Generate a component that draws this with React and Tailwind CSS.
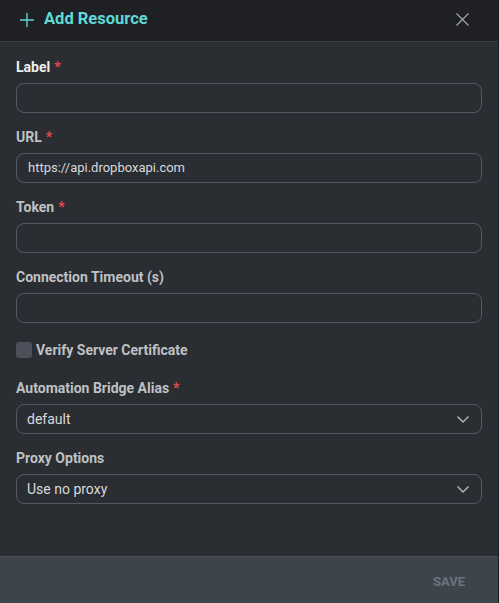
import React from "react";

const font = { fontFamily: "Roboto, 'Liberation Sans', sans-serif" };

function Label({ children, required, bright }) {
  return (
    <div className={`h-4 leading-4 text-[14px] font-bold mb-2 ${bright ? "text-[#eeeeee]" : "text-[#bfc1c4]"}`}>
      {children}
      {required && <span className="text-[#e5484d] ml-1">*</span>}
    </div>
  );
}

function Input({ value }) {
  return (
    <div className="h-[30px] rounded-lg border border-[#535966] flex items-center px-[11px] text-[13px] text-[#d8d9db]">
      {value}
    </div>
  );
}

function Select({ value }) {
  return (
    <div className="h-[30px] rounded-lg border border-[#535966] flex items-center justify-between pl-[10px] pr-[11px] text-[14px] text-[#d8d9db]">
      <span>{value}</span>
      <svg width="14" height="14" viewBox="0 0 14 14" fill="none" stroke="#b4b7bc" strokeWidth="1.4">
        <path d="M1.5 4.5 L7 10 L12.5 4.5" />
      </svg>
    </div>
  );
}

export default function App() {
  return (
    <div style={font} className="w-[499px] h-[603px] flex flex-col bg-[#2a2d32] border-r border-[#1c1d20]">
      <div className="h-[42px] bg-[#1f2024] border-b border-[#3c3f45] flex items-center justify-between pl-[19px] pr-[28px] pb-[2px] shrink-0">
        <div className="flex items-center gap-[9px]">
          <svg width="16" height="16" viewBox="0 0 16 16" fill="none" stroke="#5fd9d6" strokeWidth="1.3">
            <path d="M8 1 V15 M1 8 H15" />
          </svg>
          <span className="text-[16.5px] font-bold text-[#5fd9d6]">Add Resource</span>
        </div>
        <svg width="15" height="15" viewBox="0 0 15 15" fill="none" stroke="#9ea1a6" strokeWidth="1.3">
          <path d="M1.5 1.5 L13.5 13.5 M13.5 1.5 L1.5 13.5" />
        </svg>
      </div>
      <div className="flex-1 pl-4 pr-[16px] pt-[17px] flex flex-col">
        <Label required bright>Label</Label>
        <Input />
        <div className="h-4" />
        <Label required>URL</Label>
        <Input value="https://api.dropboxapi.com" />
        <div className="h-4" />
        <Label required>Token</Label>
        <Input />
        <div className="h-4" />
        <Label>Connection Timeout (s)</Label>
        <Input />
        <div className="mt-[19px] mb-[22px] flex items-center gap-[4px] h-4">
          <div className="w-4 h-4 rounded-[3px] bg-[#4b505a]" />
          <span className="text-[14px] font-bold text-[#bfc1c4]">Verify Server Certificate</span>
        </div>
        <Label required>Automation Bridge Alias</Label>
        <Select value="default" />
        <div className="h-4" />
        <Label>Proxy Options</Label>
        <Select value="Use no proxy" />
      </div>
      <div className="h-[47px] bg-[#3e444c] border-t border-[#4a5058] flex items-center justify-end pr-[33px] pt-1 shrink-0">
        <span className="text-[13px] font-bold text-[#6c727b]">SAVE</span>
      </div>
    </div>
  );
}
